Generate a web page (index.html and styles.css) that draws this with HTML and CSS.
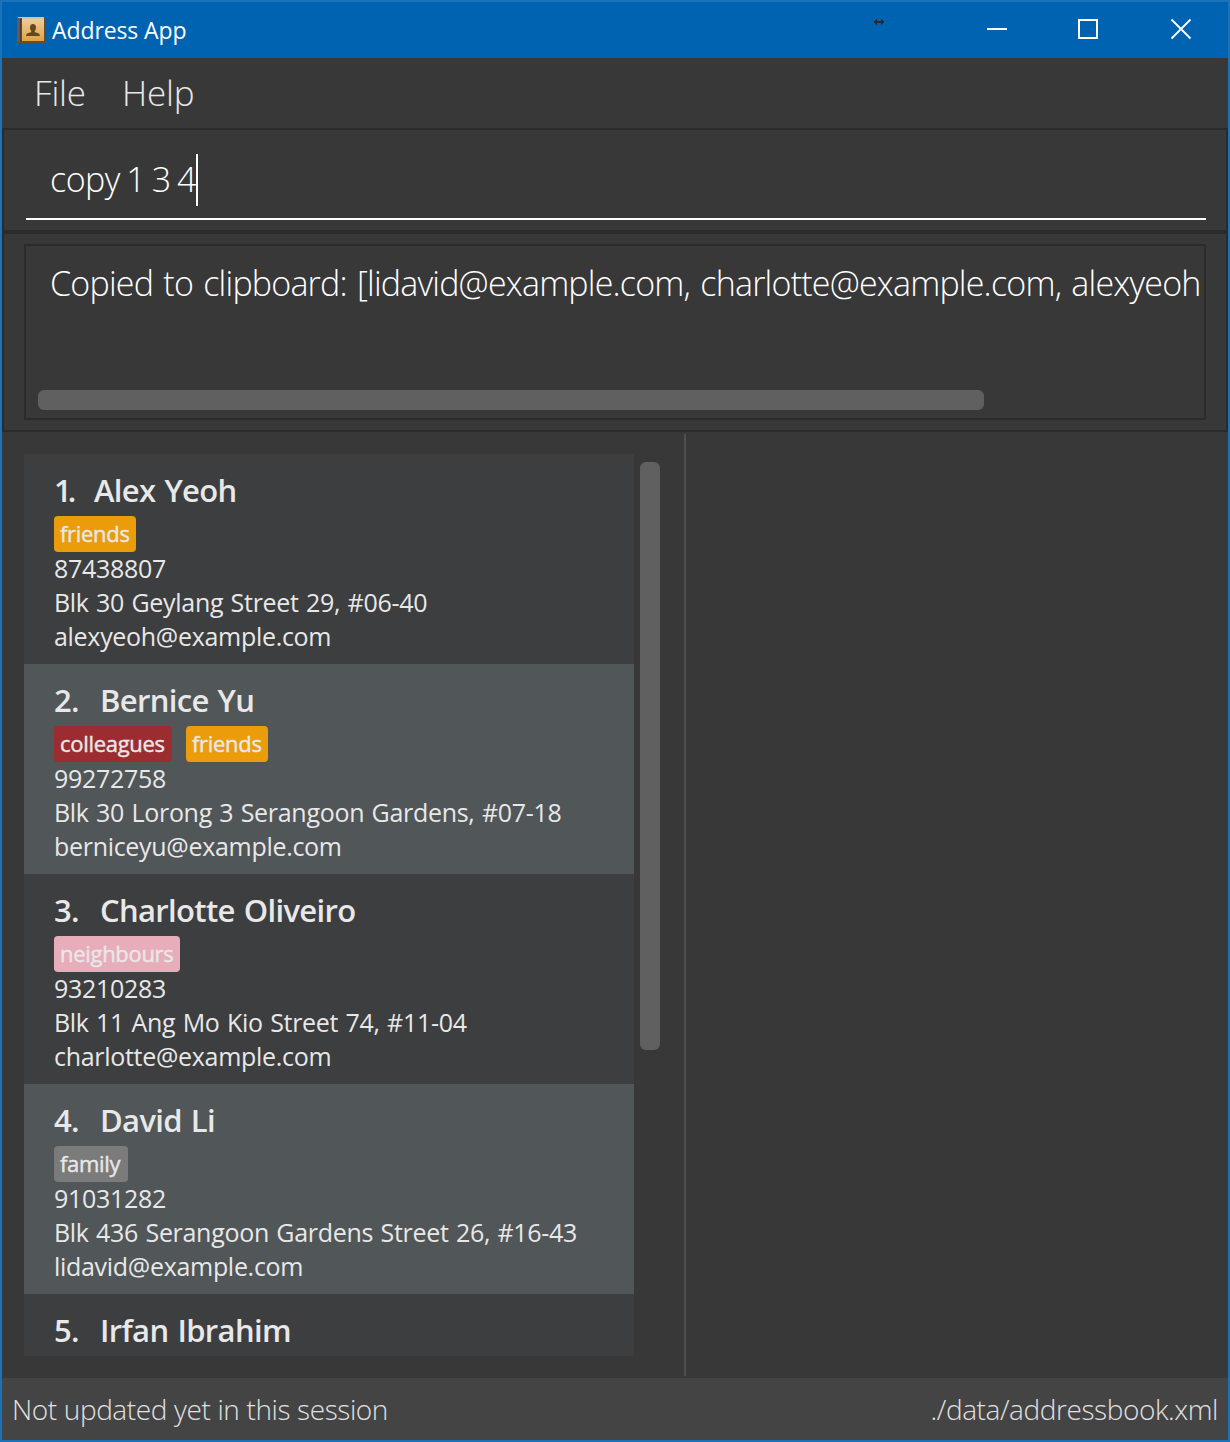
FILE: index.html
```
<!DOCTYPE html>
<html lang="en">
<head>
<meta charset="utf-8">
<title>Address App</title>
<link rel="stylesheet" href="styles.css">
</head>
<body>
<div class="window">
  <header class="titlebar">
    <svg class="app-icon" width="30" height="30" viewBox="0 0 30 30">
      <defs><linearGradient id="cover" x1="0" y1="0" x2="0" y2="1"><stop offset="0" stop-color="#edcc96"/><stop offset="1" stop-color="#dda544"/></linearGradient></defs>
      <rect x="1" y="1" width="28" height="26" rx="1" fill="#6f4b26"/>
      <rect x="2" y="1" width="26" height="2" fill="#d8c3a0"/>
      <rect x="1" y="2" width="5" height="24" fill="#6d5652"/>
      <rect x="4" y="3" width="1.500" height="23" fill="#493936"/>
      <rect x="6" y="3" width="22" height="22" fill="url(#cover)"/>
      <path d="M17 8c2 0 3 1.300 3 3.500 0 1.500-.5 2.500-1.200 3.300v1.400c2.500.6 5.200 1.100 5.200 3.800H10c0-2.700 2.700-3.200 5.200-3.800v-1.400C14.500 14 14 13 14 11.500 14 9.300 15 8 17 8z" fill="#62491f"/>
    </svg>
    <span class="title">Address App</span>
    <svg class="resize-mark" width="10" height="6" viewBox="0 0 10 6" shape-rendering="crispEdges"><path d="M0 2h1V1h1V0h1v2h4V0h1v1h1v1h1v2H9v1H8v1H7V4H3v2H2V5H1V4H0z" fill="#262b33"/></svg>
    <div class="controls">
      <svg width="92" height="56" viewBox="0 0 92 56"><path d="M35 27h20" stroke="#fff" stroke-width="2"/></svg>
      <svg width="92" height="56" viewBox="0 0 92 56"><rect x="35" y="18" width="18" height="18" fill="none" stroke="#fff" stroke-width="2"/></svg>
      <svg width="92" height="56" viewBox="0 0 92 56"><path d="M35.500 17.500l19 19m0-19l-19 19" stroke="#fff" stroke-width="1.800"/></svg>
    </div>
  </header>
  <nav class="menu"><span class="menu-item menu-file">File</span><span class="menu-item menu-help">Help</span></nav>
  <section class="pane command-pane">
    <div class="command"><span class="command-text">copy 1 3 4</span><i class="caret"></i></div>
  </section>
  <section class="pane result-pane">
    <div class="result">
      <div class="result-text">Copied to clipboard: [lidavid@example.com, charlotte@example.com, alexyeoh</div>
      <div class="hbar"></div>
    </div>
  </section>
  <main class="split">
    <div class="list-pane">
      <div class="list">
        <article class="card">
          <h2 class="name"><span class="num one">1.</span><span>Alex Yeoh</span></h2>
          <div class="tags"><span class="tag friends">friends</span></div>
          <p>87438807</p><p>Blk 30 Geylang Street 29, #06-40</p><p>alexyeoh@example.com</p>
        </article>
        <article class="card alt">
          <h2 class="name"><span class="num">2.</span><span>Bernice Yu</span></h2>
          <div class="tags"><span class="tag colleagues">colleagues</span><span class="tag friends">friends</span></div>
          <p>99272758</p><p>Blk 30 Lorong 3 Serangoon Gardens, #07-18</p><p>berniceyu@example.com</p>
        </article>
        <article class="card">
          <h2 class="name"><span class="num">3.</span><span>Charlotte Oliveiro</span></h2>
          <div class="tags"><span class="tag neighbours">neighbours</span></div>
          <p>93210283</p><p>Blk 11 Ang Mo Kio Street 74, #11-04</p><p>charlotte@example.com</p>
        </article>
        <article class="card alt">
          <h2 class="name"><span class="num">4.</span><span>David Li</span></h2>
          <div class="tags"><span class="tag family">family</span></div>
          <p>91031282</p><p>Blk 436 Serangoon Gardens Street 26, #16-43</p><p>lidavid@example.com</p>
        </article>
        <article class="card">
          <h2 class="name"><span class="num">5.</span><span>Irfan Ibrahim</span></h2>
        </article>
      </div>
      <div class="vbar"></div>
    </div>
    <div class="divider"></div>
    <div class="detail"></div>
  </main>
  <footer class="status"><span class="status-left">Not updated yet in this session</span><span class="status-right">./data/addressbook.xml</span></footer>
</div>
</body>
</html>
```
FILE: styles.css
```
* { box-sizing: border-box; }
body { margin: 0; background: #383838; font-family: "Open Sans", "Noto Sans", sans-serif; }
.window { width: 1230px; height: 1442px; border: 2px solid #1a72b8; display: flex; flex-direction: column; background: #383838; overflow: hidden; white-space: nowrap; }

.titlebar { height: 56px; flex: none; display: flex; background: #0063b1; color: #fff; }
.app-icon { margin: 14px 0 0 14px; flex: none; }
.title { margin-left: 6px; font-size: 23px; line-height: 56px; letter-spacing: -0.1px; }
.resize-mark { margin: 17px 68px 0 auto; flex: none; }
.controls { display: flex; flex: none; }
.controls svg { display: block; }

.menu { height: 70px; flex: none; display: flex; padding-left: 32px; color: #e8e8e8; font-size: 35px; font-weight: 300; line-height: 70px; }
.menu-item { letter-spacing: -0.2px; }
.menu-file { width: 88px; }

.pane { flex: none; border: 2px solid #2b2b2b; }
.command-pane { height: 104px; padding: 0 20px 0 22px; }
.command { height: 90px; border-bottom: 2px solid #fff; padding: 24px 0 0 24px; display: flex; color: #fff; font-size: 34px; font-weight: 300; }
.command-text { line-height: 50px; letter-spacing: -0.5px; word-spacing: -1.9px; }
.caret { width: 2px; height: 52px; background: #fff; }

.result-pane { height: 200px; padding: 10px 20px; }
.result { height: 176px; border: 2px solid #2b2b2b; display: flex; flex-direction: column; justify-content: space-between; padding: 10px 0 8px 12px; }
.result-text { padding-left: 12px; color: #fff; font-size: 34px; font-weight: 300; line-height: 54px; letter-spacing: -0.8px; word-spacing: 2.2px; }
.hbar { width: 946px; height: 20px; border-radius: 6px; background: #606060; }

.split { flex: 1; min-height: 0; display: flex; padding: 2px 0; }
.list-pane { width: 682px; display: flex; gap: 6px; padding: 20px 0 20px 22px; }
.list { width: 610px; overflow: hidden; }
.card { height: 210px; padding: 10px 30px; background: #3c3e3f; color: #e8e8e8; }
.alt { background: #515658; }
.name { margin: 0; height: 52px; display: flex; font-size: 31px; font-weight: 600; line-height: 52px; letter-spacing: -0.65px; word-spacing: 1.5px; }
.num { width: 46px; }
.one { width: 40px; letter-spacing: -4px; }
.tags { height: 35px; display: flex; gap: 14px; }
.tag { height: 36px; padding: 0 6px; border-radius: 4px; font-size: 22px; line-height: 35px; letter-spacing: -0.3px; -webkit-text-stroke: 0.4px currentColor; }
.friends { width: 82px; background: #eb9c0b; }
.colleagues { width: 118px; background: #9b2d30; }
.neighbours { width: 126px; background: #e8adba; }
.family { width: 74px; background: #7b7b7b; }
.card p { margin: 0; font-size: 25px; line-height: 34px; letter-spacing: -0.3px; word-spacing: 1.2px; }
.vbar { width: 20px; height: 588px; margin-top: 8px; border-radius: 6px; background: #606060; }
.divider { width: 2px; background: #4f4f4f; }
.detail { flex: 1; }

.status { height: 62px; flex: none; display: flex; justify-content: space-between; padding: 0 10px; background: #444; color: #e0e0e0; font-size: 28px; font-weight: 300; line-height: 62px; letter-spacing: -0.42px; word-spacing: 0.2px; }
```
